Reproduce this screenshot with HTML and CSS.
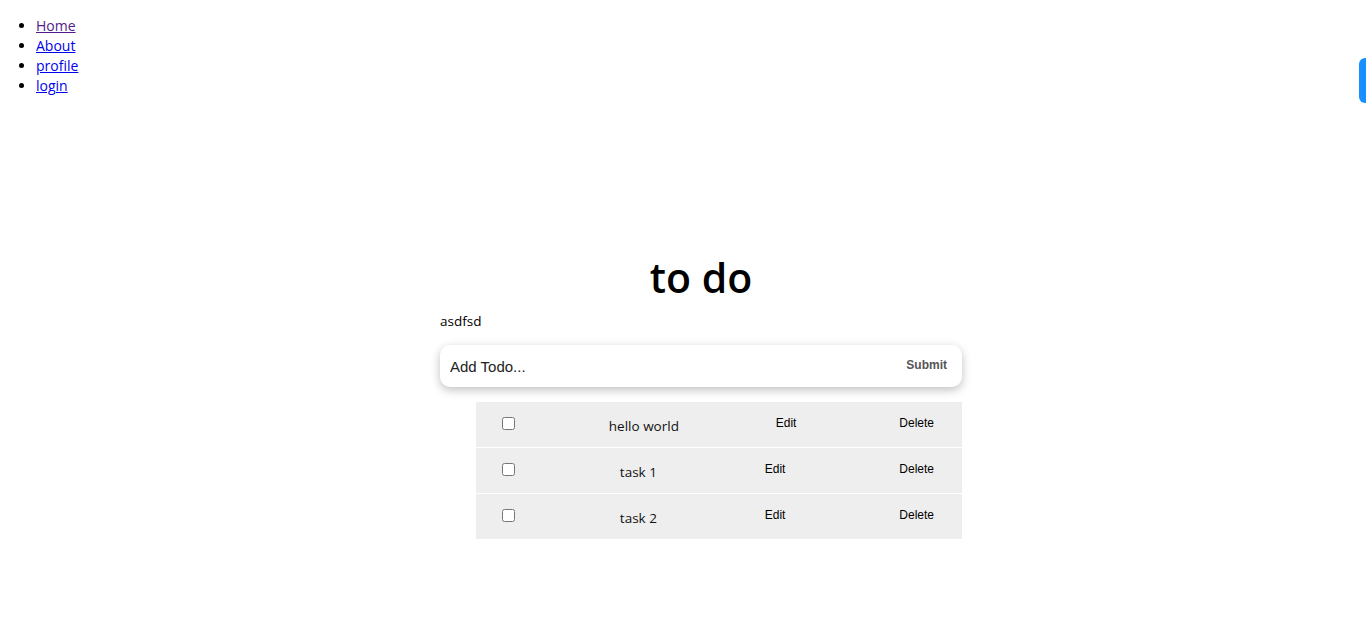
FILE: index.html
```html
<!DOCTYPE html>
<html>
<head>
<meta charset="utf-8">
<link rel="stylesheet" href="styles.css">
</head>
<body>
<ul class="nav">
  <li><a class="visited" href="#">Home</a></li>
  <li><a href="#">About</a></li>
  <li><a href="#">profile</a></li>
  <li><a href="#">login</a></li>
</ul>
<div class="side-tab"></div>
<main class="main">
  <div class="todo">
    <h1 class="title">to do</h1>
    <p class="note">asdfsd</p>
    <form class="add-form">
      <input class="add-input" type="text" placeholder="Add Todo...">
      <button class="submit" type="button">Submit</button>
    </form>
    <div class="list">
      <div class="row">
        <input class="check" type="checkbox">
        <span class="task">hello world</span>
        <button class="action" type="button">Edit</button>
        <button class="action" type="button">Delete</button>
      </div>
      <div class="row">
        <input class="check" type="checkbox">
        <span class="task">task 1</span>
        <button class="action" type="button">Edit</button>
        <button class="action" type="button">Delete</button>
      </div>
      <div class="row">
        <input class="check" type="checkbox">
        <span class="task">task 2</span>
        <button class="action" type="button">Edit</button>
        <button class="action" type="button">Delete</button>
      </div>
    </div>
  </div>
</main>
</body>
</html>
```
FILE: styles.css
```css
html, body {
  margin: 0;
  padding: 0;
  background: #fff;
}
body {
  font-family: "Open Sans", "Noto Sans", sans-serif;
  color: #000;
}
.nav {
  margin: 16px 0 0 0;
  padding-left: 36px;
  font-size: 14px;
  line-height: 20px;
}
.nav a {
  color: #0000ee;
}
.nav a.visited {
  color: #551a8b;
}
.side-tab {
  position: fixed;
  top: 58px;
  right: 0;
  width: 7px;
  height: 45px;
  background: #1890ff;
  border-radius: 6px 0 0 6px;
}
.main {
  display: flex;
  justify-content: center;
  padding-left: 36px;
  margin-top: 155px;
}
.todo {
  width: 522px;
}
.title {
  margin: 0;
  text-align: center;
  font-size: 41px;
  font-weight: 600;
  line-height: 52px;
}
.note {
  margin: 8px 0 0 0;
  font-size: 13.5px;
  line-height: 20px;
}
.add-form {
  margin-top: 14px;
  height: 42px;
  display: flex;
  align-items: center;
  background: #fff;
  border-radius: 10px;
  box-shadow: 0 3px 10px rgba(0, 0, 0, 0.25);
  padding: 0 10px;
}
.add-input {
  flex: 1;
  border: none;
  outline: none;
  background: transparent;
  font-family: "Liberation Sans", Arial, sans-serif;
  font-size: 15px;
  padding: 0;
}
.add-input::placeholder {
  color: #222;
}
.submit {
  border: none;
  background: transparent;
  font-family: "Liberation Sans", Arial, sans-serif;
  font-weight: bold;
  font-size: 12px;
  color: #555;
  padding: 0 5px 2px;
}
.list {
  margin: 15px 0 0 36px;
}
.row {
  height: 45px;
  margin-bottom: 1px;
  background: #eeeeee;
  display: flex;
  align-items: center;
  justify-content: space-between;
  padding: 0 22px;
}
.check {
  margin: 0 3px 2px 4px;
  width: 13px;
  height: 13px;
}
.task {
  font-size: 13.5px;
  color: #111;
  padding-top: 3px;
}
.action {
  border: none;
  background: transparent;
  font-family: "Liberation Sans", Arial, sans-serif;
  font-size: 12px;
  color: #000;
  padding: 1px 6px 4px;
}
```
